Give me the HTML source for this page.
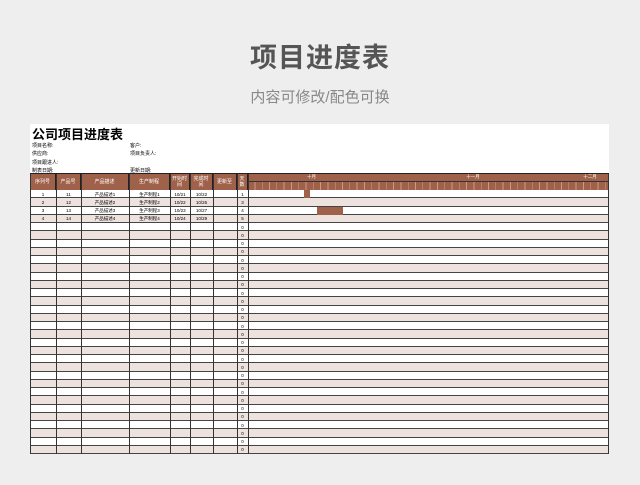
<!DOCTYPE html>
<html><head><meta charset="utf-8"><style>
body{margin:0;width:640px;height:485px;background:#eeeeee;font-family:"Liberation Sans","Noto Sans CJK SC",sans-serif;position:relative;overflow:hidden}
.t1{position:absolute;top:36px;width:640px;text-align:center;font-size:27px;color:#555;font-weight:bold;letter-spacing:1px}
.t2{position:absolute;top:86px;width:640px;text-align:center;font-size:15px;color:#888}
.sheet{position:absolute;left:30px;top:124px;width:579px;height:330px;background:#fff;overflow:hidden}
.h{position:absolute;left:2px;top:0;font-size:13px;font-weight:bold;color:#000}
.m{position:absolute;font-size:5px;color:#000}
.hd{position:absolute;top:50px;height:16px;background:#a0614a;color:#fff;font-size:5px;text-align:center;display:flex;align-items:center;justify-content:center;border-right:1px solid #222;box-sizing:border-box;line-height:1.2}
.row{position:absolute;left:0;width:579px;height:8.25px;border-bottom:1px solid #444;box-sizing:border-box}
.vl{position:absolute;top:50px;bottom:0;width:1px;background:#333}
.c{position:absolute;font-size:4.5px;color:#000;text-align:center}
.bar{position:absolute;background:#a0614a}
</style></head><body>
<div class="t1">项目进度表</div>
<div class="t2">内容可修改/配色可换</div>
<div class="sheet">
<div class="h">公司项目进度表</div>
<div class="m" style="left:2px;top:18px">项目名称:</div><div class="m" style="left:100px;top:18px">客户:</div>
<div class="m" style="left:2px;top:26px">供应商:</div><div class="m" style="left:100px;top:26px">项目负责人:</div>
<div class="m" style="left:2px;top:35px">项目跟进人:</div>
<div class="m" style="left:2px;top:43px">制表日期:</div><div class="m" style="left:100px;top:43px">更新日期:</div>
<div style="position:absolute;left:0;top:49px;width:579px;height:1px;background:#222"></div>
<div class="hd" style="left:0;width:26px">序列号</div>
<div class="hd" style="left:26px;width:25px">产品号</div>
<div class="hd" style="left:51px;width:48px">产品描述</div>
<div class="hd" style="left:99px;width:41px">生产制程</div>
<div class="hd" style="left:140px;width:20px">开始时<br>间</div>
<div class="hd" style="left:160px;width:23px">完成时<br>间</div>
<div class="hd" style="left:183px;width:24px">更新至</div>
<div class="hd" style="left:207px;width:11px">天<br>数</div>
<div style="position:absolute;left:218px;top:50px;width:127px;height:7px;border-right:1px solid #333;color:#fff;font-size:4.5px;text-align:center;background:#a0614a">十月</div>
<div style="position:absolute;left:345px;top:50px;width:196px;height:7px;border-right:1px solid #333;color:#fff;font-size:4.5px;text-align:center;background:#a0614a">十一月</div>
<div style="position:absolute;left:541px;top:50px;width:38px;height:7px;color:#fff;font-size:4.5px;text-align:center;background:#a0614a">十二月</div>
<div style="position:absolute;left:218px;top:57px;width:361px;height:9px;border-top:1px solid #333;box-sizing:border-box;background:#a0614a repeating-linear-gradient(90deg,transparent 0 6.5px,#c89a88 6.5px 7.3px)"></div>
<div id="rows"></div>
<div class="bar" style="left:274px;top:66px;width:6px;height:8px"></div>
<div class="bar" style="left:287px;top:83px;width:26px;height:8px"></div>
</div>
<script>
var s='',tops=66,d=[["1","11","产品描述1","生产制程1","10/21","10/22","","1"],["2","12","产品描述2","生产制程2","10/22","10/26","","3"],["3","13","产品描述3","生产制程3","10/23","10/27","","4"],["4","14","产品描述4","生产制程4","10/24","10/29","","5"]];
var xs=[0,26,51,99,140,160,183,207];var ws=[26,25,48,41,20,23,24,11];
for(var i=0;i<32;i++){var y=tops+i*8.25;s+='<div class="row" style="top:'+y+'px;background:'+(i%2?'#ede2dd':'#fff')+'"></div>';
var r=d[i]||["","","","","","","","0"];
for(var j=0;j<8;j++)if(r[j])s+='<div class="c" style="left:'+xs[j]+'px;width:'+ws[j]+'px;top:'+(y+1.5)+'px">'+r[j]+'</div>';}
var vx=[0,26,51,99,140,160,183,207,218,578];for(var k=0;k<vx.length;k++)s+='<div class="vl" style="left:'+vx[k]+'px"></div>';
document.getElementById('rows').innerHTML=s;
</script>
</body></html>
